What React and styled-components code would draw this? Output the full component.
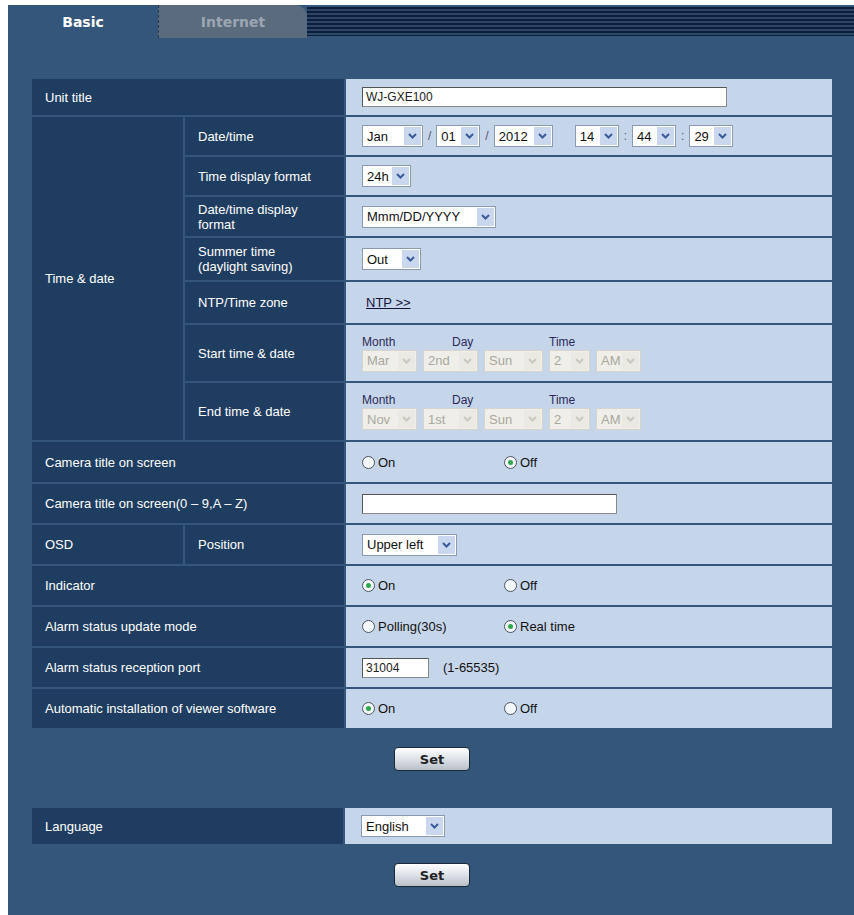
import React from 'react';
import styled, { createGlobalStyle } from 'styled-components';

const Global = createGlobalStyle`
  body { margin: 0; background: #fff; font-family: Arial, "Liberation Sans", sans-serif; }
`;

const Page = styled.div`
  width: 846px;
  height: 910px;
  margin: 5px 0 0 8px;
  background: #34567a;
`;

const TabBar = styled.div`
  display: flex;
  height: 33px;
  background: #34567a;
`;

const Tab = styled.div`
  width: ${p => p.w}px;
  display: flex;
  align-items: center;
  justify-content: center;
  font-family: "DejaVu Sans", sans-serif;
  font-weight: bold;
  font-size: 14px;
  color: ${p => (p.active ? '#fff' : '#9aa6b2')};
  background: ${p => (p.active ? '#34567a' : '#5a6b7d')};
  border-radius: ${p => (p.active ? '6px 0 0 0' : '0 12px 0 0')};
  border-left: ${p => (p.active ? 'none' : '1px dashed #2a3a4c')};
`;

const Stripes = styled.div`
  flex: 1;
  margin-top: 2px;
  background: repeating-linear-gradient(#0c1e3a 0 2px, #2c4668 2px 4px);
  height: 29px;
`;

const Table = styled.table`
  margin: ${p => p.top ?? 39}px 0 0 22px;
  width: 804px;
  border-collapse: separate;
  border-spacing: 2px;
  font-size: 13px;
`;

const Label = styled.td`
  background: #1f3d60;
  color: #fff;
  padding: 0 0 0 13px;
  height: ${p => p.h || 36}px;
  width: ${p => p.w || 'auto'};
`;

const Value = styled.td`
  background: #c6d6ea;
  color: #111;
  padding: 0 0 0 16px;
  height: ${p => p.h || 36}px;
`;

const Row = styled.div`
  display: flex;
  align-items: center;
  gap: ${p => p.gap || 0}px;
`;

const SelBox = styled.div`
  display: inline-flex;
  align-items: stretch;
  height: 20px;
  border: 1px solid ${p => (p.disabled ? '#d6d4cc' : '#8a9ab0')};
  background: ${p => (p.disabled ? '#efeee8' : '#fff')};
  color: ${p => (p.disabled ? '#a8a8a0' : '#111')};
  font-size: 13px;
`;

const SelText = styled.span`
  display: flex;
  align-items: center;
  padding: 0 4px;
  width: ${p => p.w}px;
`;

const Arrow = styled.span`
  width: 17px;
  display: flex;
  align-items: center;
  justify-content: center;
  background: ${p => (p.disabled ? '#eae9e2' : '#c9d8ef')};
  margin: 1px;
`;

const Select = ({ value, w = 30, disabled }) => (
  <SelBox disabled={disabled}>
    <SelText w={w}>{value}</SelText>
    <Arrow disabled={disabled}>
      <svg width="9" height="6" viewBox="0 0 9 6">
        <path d="M1 1l3.5 3.5L8 1" fill="none" stroke={disabled ? '#c8c8c0' : '#3a5a9a'} strokeWidth="2" />
      </svg>
    </Arrow>
  </SelBox>
);

const Sep = styled.span`
  color: #556;
  margin: 0 5px;
  font-size: 12px;
`;

const Input = styled.div`
  width: ${p => p.w}px;
  height: 18px;
  background: #fff;
  border: 1px solid #8a8a8a;
  border-top-color: #555;
  border-left-color: #555;
  font-size: 12px;
  color: #222;
  padding-left: 3px;
  display: flex;
  align-items: center;
`;

const RadioItem = styled.label`
  display: inline-flex;
  align-items: center;
  gap: 3px;
  width: ${p => p.w || 'auto'}px;
  font-size: 13px;
`;

const Circle = styled.span`
  width: 11px;
  height: 11px;
  border-radius: 50%;
  border: 1px solid #4a5560;
  background: #f4f8fb;
  display: flex;
  align-items: center;
  justify-content: center;
  &::after {
    content: '';
    width: 5px;
    height: 5px;
    border-radius: 50%;
    background: ${p => (p.on ? '#2ea84a' : 'transparent')};
  }
`;

const Radios = ({ a, b, on, w = 142 }) => (
  <Row>
    <RadioItem w={w}><Circle on={on === 0} />{a}</RadioItem>
    <RadioItem><Circle on={on === 1} />{b}</RadioItem>
  </Row>
);

const Caption = styled.div`
  display: flex;
  font-size: 12px;
  color: #2a2a5a;
  margin-bottom: 1px;
`;

const Cap = styled.span`
  width: ${p => p.w}px;
`;

const Link = styled.span`
  text-decoration: underline;
  color: #14143a;
  margin-left: 4px;
`;

const ButtonBar = styled.div`
  display: flex;
  justify-content: center;
  padding: ${p => p.pad};
  margin-left: 22px;
  width: 804px;
`;

const Button = styled.button`
  width: 76px;
  height: 24px;
  border: 1px solid #1a2a3a;
  border-radius: 4px;
  background: linear-gradient(#ffffff, #dde2e8 50%, #b8c0c9);
  font-weight: bold;
  font-family: "DejaVu Sans", sans-serif;
  font-size: 13px;
  color: #222;
`;

const Timed = ({ m, d, wd }) => (
  <div>
    <Caption><Cap w={90}>Month</Cap><Cap w={97}>Day</Cap><Cap w={40}>Time</Cap></Caption>
    <Row gap={6}>
      <Select value={m} w={26} disabled />
      <Select value={d} w={26} disabled />
      <Select value={wd} w={30} disabled />
      <Select value="2" w={12} disabled />
      <Select value="AM" w={16} disabled />
    </Row>
  </div>
);

export default function App() {
  return (
    <Page>
      <Global />
      <TabBar>
        <Tab w={150} active>Basic</Tab>
        <Tab w={148}>Internet</Tab>
        <Stripes />
      </TabBar>
      <Table>
        <tbody>
          <tr>
            <Label colSpan={2} h={36}>Unit title</Label>
            <Value h={36}><Input w={360}>WJ-GXE100</Input></Value>
          </tr>
          <tr>
            <Label rowSpan={7} w="138px">Time &amp; date</Label>
            <Label w="146px" h={38}>Date/time</Label>
            <Value h={38}>
              <Row>
                <Select value="Jan" w={32} /><Sep>/</Sep>
                <Select value="01" w={15} /><Sep>/</Sep>
                <Select value="2012" w={30} />
                <span style={{ width: 22 }} />
                <Select value="14" w={15} /><Sep>:</Sep>
                <Select value="44" w={15} /><Sep>:</Sep>
                <Select value="29" w={15} />
              </Row>
            </Value>
          </tr>
          <tr>
            <Label h={38}>Time display format</Label>
            <Value><Select value="24h" w={20} /></Value>
          </tr>
          <tr>
            <Label h={39}>Date/time display<br />format</Label>
            <Value><Select value="Mmm/DD/YYYY" w={105} /></Value>
          </tr>
          <tr>
            <Label h={42}>Summer time<br />(daylight saving)</Label>
            <Value><Select value="Out" w={30} /></Value>
          </tr>
          <tr>
            <Label h={41}>NTP/Time zone</Label>
            <Value><Link>NTP &gt;&gt;</Link></Value>
          </tr>
          <tr>
            <Label h={56}>Start time &amp; date</Label>
            <Value><Timed m="Mar" d="2nd" wd="Sun" /></Value>
          </tr>
          <tr>
            <Label h={57}>End time &amp; date</Label>
            <Value><Timed m="Nov" d="1st" wd="Sun" /></Value>
          </tr>
          <tr>
            <Label colSpan={2} h={40}>Camera title on screen</Label>
            <Value><Radios a="On" b="Off" on={1} /></Value>
          </tr>
          <tr>
            <Label colSpan={2} h={39}>Camera title on screen(0 – 9,A – Z)</Label>
            <Value><Input w={250} /></Value>
          </tr>
          <tr>
            <Label h={39}>OSD</Label>
            <Label>Position</Label>
            <Value><Select value="Upper left" w={66} /></Value>
          </tr>
          <tr>
            <Label colSpan={2} h={39}>Indicator</Label>
            <Value><Radios a="On" b="Off" on={0} /></Value>
          </tr>
          <tr>
            <Label colSpan={2} h={39}>Alarm status update mode</Label>
            <Value><Radios a="Polling(30s)" b="Real time" on={1} /></Value>
          </tr>
          <tr>
            <Label colSpan={2} h={39}>Alarm status reception port</Label>
            <Value><Row gap={14}><Input w={62}>31004</Input><span>(1-65535)</span></Row></Value>
          </tr>
          <tr>
            <Label colSpan={2} h={39}>Automatic installation of viewer software</Label>
            <Value><Radios a="On" b="Off" on={0} /></Value>
          </tr>
        </tbody>
      </Table>
      <ButtonBar pad="17px 0 35px"><Button>Set</Button></ButtonBar>
      <Table top={0}>
        <tbody>
          <tr>
            <Label w="298px" h={36}>Language</Label>
            <Value><Select value="English" w={55} /></Value>
          </tr>
        </tbody>
      </Table>
      <ButtonBar pad="17px 0"><Button>Set</Button></ButtonBar>
    </Page>
  );
}
